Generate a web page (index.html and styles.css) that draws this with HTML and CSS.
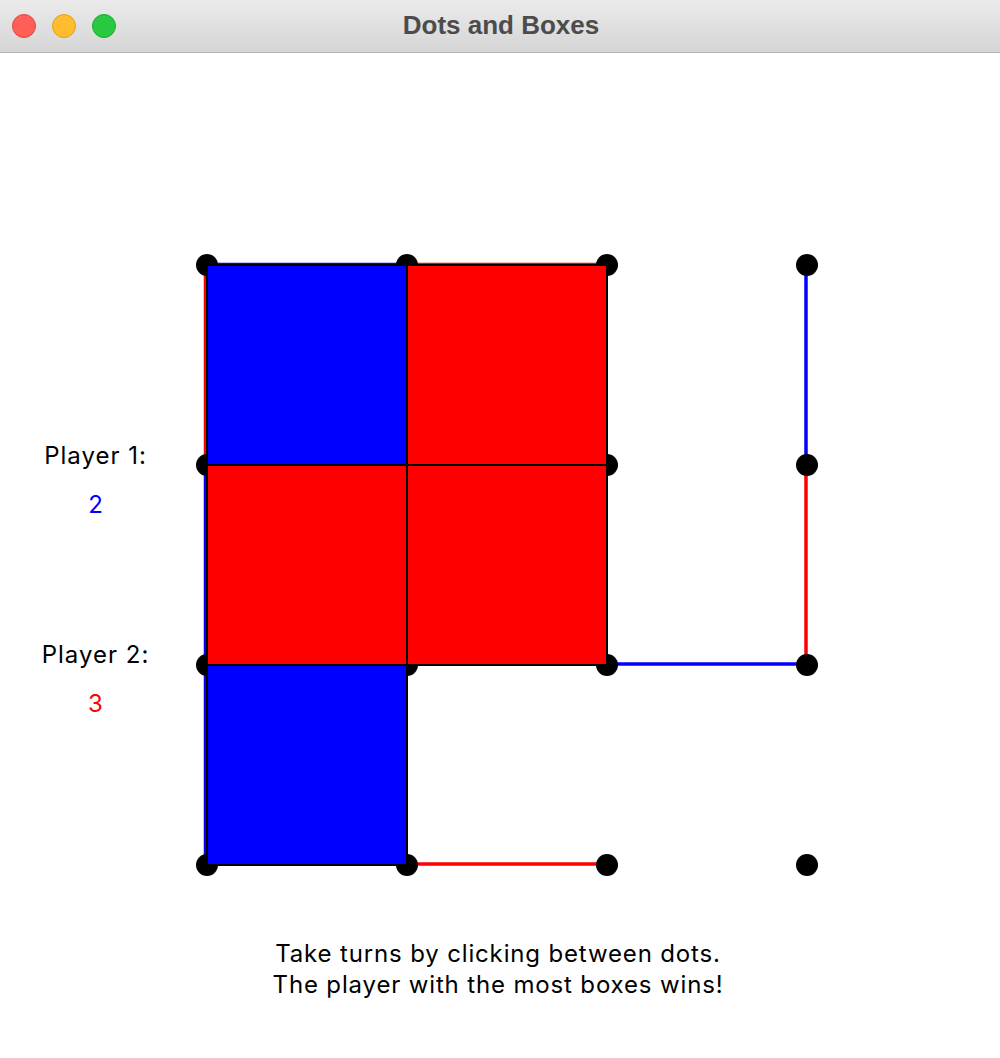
FILE: index.html
```html
<!DOCTYPE html>
<html>
<head>
<meta charset="utf-8">
<title>Dots and Boxes</title>
<link rel="stylesheet" href="styles.css">
</head>
<body>
<div class="window">
  <header class="titlebar">
    <div class="lights">
      <span class="light light-red"></span>
      <span class="light light-yellow"></span>
      <span class="light light-green"></span>
    </div>
    <div class="title">Dots and Boxes</div>
  </header>
  <main class="content">
    <div class="game">
      <aside class="sidebar">
        <div class="player">
          <div class="player-label">Player 1:</div>
          <div class="score score-blue">2</div>
        </div>
        <div class="player">
          <div class="player-label">Player 2:</div>
          <div class="score score-red">3</div>
        </div>
      </aside>
      <svg class="board" width="640" height="640" viewBox="190 240 640 640" xmlns="http://www.w3.org/2000/svg">
        <g class="lines" stroke-width="3.5" stroke-linecap="butt">
          <line x1="207" y1="264.5" x2="407" y2="264.5" stroke="#0000ff"/>
          <line x1="407" y1="264.5" x2="607" y2="264.5" stroke="#ff0000"/>
          <line x1="205.5" y1="265" x2="205.5" y2="465" stroke="#ff0000"/>
          <line x1="205.5" y1="465" x2="205.5" y2="665" stroke="#0000ff"/>
          <line x1="205.5" y1="665" x2="205.5" y2="865" stroke="#0000ff"/>
          <line x1="806" y1="265" x2="806" y2="465" stroke="#0000ff"/>
          <line x1="806" y1="465" x2="806" y2="665" stroke="#ff0000"/>
          <line x1="607" y1="664" x2="807" y2="664" stroke="#0000ff"/>
          <line x1="407" y1="864" x2="607" y2="864" stroke="#ff0000"/>
        </g>
        <g class="dots" fill="#000">
          <circle cx="207" cy="265" r="11"/>
          <circle cx="407" cy="265" r="11"/>
          <circle cx="607" cy="265" r="11"/>
          <circle cx="807" cy="265" r="11"/>
          <circle cx="207" cy="465" r="11"/>
          <circle cx="407" cy="465" r="11"/>
          <circle cx="607" cy="465" r="11"/>
          <circle cx="807" cy="465" r="11"/>
          <circle cx="207" cy="665" r="11"/>
          <circle cx="407" cy="665" r="11"/>
          <circle cx="607" cy="665" r="11"/>
          <circle cx="807" cy="665" r="11"/>
          <circle cx="207" cy="865" r="11"/>
          <circle cx="407" cy="865" r="11"/>
          <circle cx="607" cy="865" r="11"/>
          <circle cx="807" cy="865" r="11"/>
        </g>
        <g class="boxes" stroke="#000" stroke-width="2">
          <rect x="207" y="265" width="200" height="200" fill="#0000ff"/>
          <rect x="407" y="265" width="200" height="200" fill="#ff0000"/>
          <rect x="207" y="465" width="200" height="200" fill="#ff0000"/>
          <rect x="407" y="465" width="200" height="200" fill="#ff0000"/>
          <rect x="207" y="665" width="200" height="200" fill="#0000ff"/>
        </g>
      </svg>
    </div>
    <div class="instructions">
      <p>Take turns by clicking between dots.</p>
      <p>The player with the most boxes wins!</p>
    </div>
  </main>
</div>
</body>
</html>
```

FILE: styles.css
```css
* { box-sizing: border-box; }
html, body {
  margin: 0;
  padding: 0;
  background: #ffffff;
}
.window {
  width: 1000px;
  height: 1058px;
  display: flex;
  flex-direction: column;
  background: #ffffff;
  overflow: hidden;
}
.titlebar {
  position: relative;
  height: 53px;
  flex: 0 0 53px;
  background: linear-gradient(#ebebeb, #d5d5d5);
  border-bottom: 1px solid #b3b3b3;
  display: flex;
  align-items: center;
  justify-content: center;
}
.lights {
  position: absolute;
  left: 12px;
  top: 14px;
  display: flex;
  gap: 16px;
}
.light {
  width: 24px;
  height: 24px;
  border-radius: 50%;
  display: block;
}
.light-red { background: #ff5f57; border: 1px solid #e2463f; }
.light-yellow { background: #febc2e; border: 1px solid #e1a116; }
.light-green { background: #28c840; border: 1px solid #14ae2a; }
.title {
  font-family: "Liberation Sans", Arial, sans-serif;
  font-weight: bold;
  font-size: 26px;
  color: #4c4c4c;
  margin-top: -1px;
  padding-left: 2px;
}
.content {
  flex: 1;
  display: flex;
  flex-direction: column;
  font-family: Inter, "Liberation Sans", sans-serif;
  color: #000;
}
.game {
  display: flex;
  align-items: flex-start;
}
.sidebar {
  width: 190px;
  padding-top: 388px;
  display: flex;
  flex-direction: column;
  gap: 120px;
}
.player {
  display: flex;
  flex-direction: column;
  align-items: center;
  gap: 19px;
  padding-left: 1px;
}
.player-label, .score {
  font-size: 24px;
  line-height: 30px;
  height: 30px;
}
.player-label {
  letter-spacing: 1px;
}
.score-blue { color: #0000ff; }
.score-red { color: #ff0000; }
.board {
  display: block;
  margin-top: 187px;
  flex: 0 0 auto;
}
.instructions {
  margin-top: 58px;
  text-align: center;
  font-size: 24px;
  line-height: 31px;
  letter-spacing: 0.85px;
  padding-right: 4px;
}
.instructions p {
  margin: 0;
}
```
